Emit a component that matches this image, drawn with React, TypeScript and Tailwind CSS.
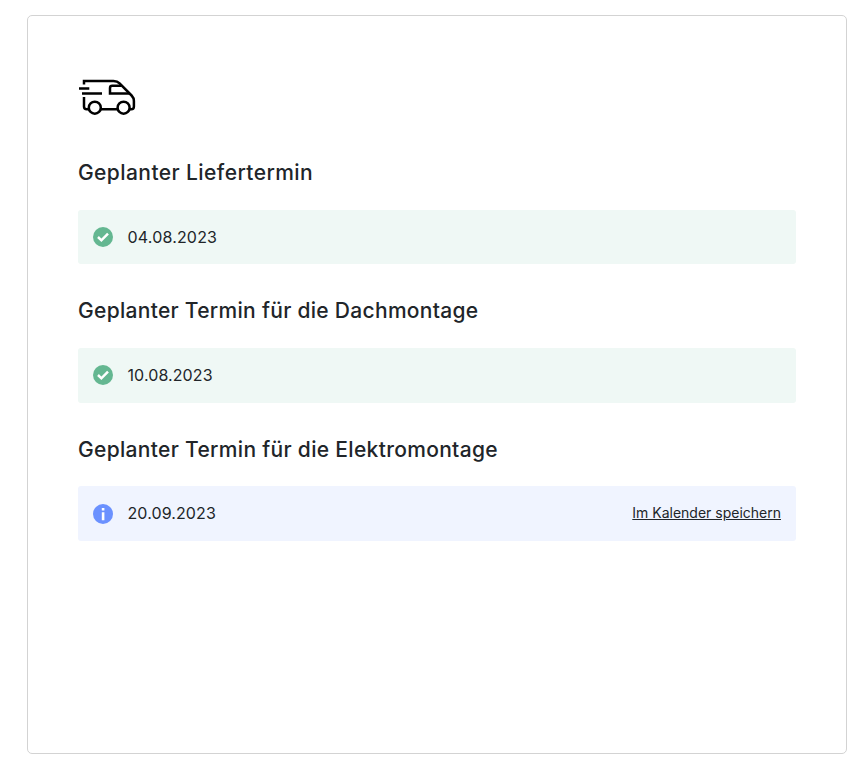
function Van() {
  return (
    <svg width="60" height="40" viewBox="0 0 60 40" fill="none" stroke="#000" strokeWidth="2.5" className="block">
      <path d="M6 7.600V4h29.500c2.800 0 4.400.6 6.100 2.300L53.600 18.500c1.700 1.800 2.300 3 2.300 5.500v5.500c0 1.900-1 2.800-2.600 2.800h-2" />
      <path d="M43.500 8.700h-9.300q-2.200 0-2.200 2.200v5.500h19.600" />
      <path d="M1 11.400h10.300M4 16.400h20M6 20v9.500q0 2.800 2.800 2.800h2M23 32.300h16.500" />
      <circle cx="16.800" cy="30.700" r="6" />
      <circle cx="45.600" cy="30.700" r="6" />
    </svg>
  );
}

function Check() {
  return (
    <svg width="20" height="20" viewBox="0 0 20 20" className="block shrink-0">
      <circle cx="10" cy="10" r="10" fill="#64b791" />
      <path d="M5 10l3.400 3.300 6.600-6.600" fill="none" stroke="#fff" strokeWidth="2.500" />
    </svg>
  );
}

function Info() {
  return (
    <svg width="20" height="20" viewBox="0 0 20 20" className="block shrink-0">
      <circle cx="10" cy="10" r="10" fill="#6b91ff" />
      <path d="M8.800 4h2.600v2.400H8.800zM8.800 8.300h2.600v8H8.800z" fill="#fff" />
    </svg>
  );
}

type Item = { title: string; date: string; done: boolean; titleClass: string; dateClass: string };

const items: Item[] = [
  { title: "Geplanter Liefertermin", date: "04.08.2023", done: true, titleClass: "tracking-[0.42px]", dateClass: "tracking-[0.18px]" },
  { title: "Geplanter Termin für die Dachmontage", date: "10.08.2023", done: true, titleClass: "tracking-[0.3px]", dateClass: "tracking-[0.1px]" },
  { title: "Geplanter Termin für die Elektromontage", date: "20.09.2023", done: false, titleClass: "tracking-[0.32px]", dateClass: "tracking-[0.1px]" },
];

export default function App() {
  return (
    <div className="h-[763px] bg-white pt-[15px] pl-[27px] font-['Inter',sans-serif] text-[#212529]">
      <main className="h-[739px] w-[820px] rounded-[5px] border border-[#d3d3d3] px-[50px] pt-[61px]">
        <Van />
        <div className="mt-[39px] flex flex-col gap-[29.83px]">
          {items.map((item) => (
            <section key={item.title}>
              <h2 className={`h-[54px] pt-[4.2px] text-[21px] leading-[26px] font-medium whitespace-nowrap ${item.titleClass}`}>
                {item.title}
              </h2>
              <div className={`flex h-[54.4px] items-center rounded-[3px] px-[15px] ${item.done ? "bg-[#eff8f5]" : "bg-[#f0f4ff]"}`}>
                {item.done ? <Check /> : <Info />}
                <span className={`ml-[14.5px] pb-px text-base leading-6 ${item.dateClass}`}>{item.date}</span>
                {!item.done && (
                  <a href="#" className="ml-auto pb-px text-sm underline">Im Kalender speichern</a>
                )}
              </div>
            </section>
          ))}
        </div>
      </main>
    </div>
  );
}
